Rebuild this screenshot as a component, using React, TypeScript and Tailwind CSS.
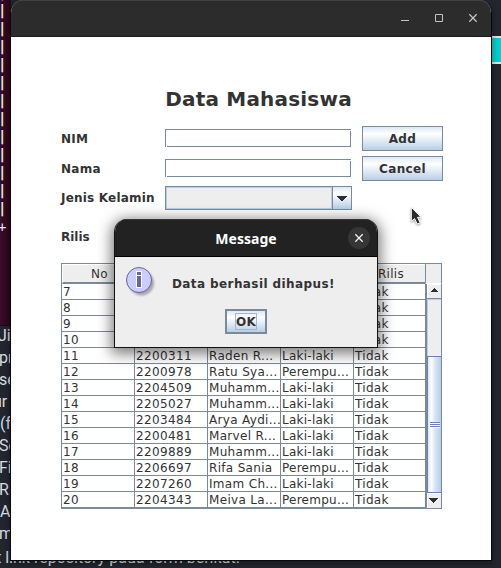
import React from "react";

type Row = [string, string, string, string, string];

const rows: Row[] = [
  ["7", "", "", "", "Tidak"],
  ["8", "", "", "", "Tidak"],
  ["9", "", "", "", "Tidak"],
  ["10", "", "", "", "Tidak"],
  ["11", "2200311", "Raden R...", "Laki-laki", "Tidak"],
  ["12", "2200978", "Ratu Sya...", "Perempu...", "Tidak"],
  ["13", "2204509", "Muhamm...", "Laki-laki", "Tidak"],
  ["14", "2205027", "Muhamm...", "Laki-laki", "Tidak"],
  ["15", "2203484", "Arya Aydi...", "Laki-laki", "Tidak"],
  ["16", "2200481", "Marvel R...", "Laki-laki", "Tidak"],
  ["17", "2209889", "Muhamm...", "Laki-laki", "Tidak"],
  ["18", "2206697", "Rifa Sania", "Perempu...", "Tidak"],
  ["19", "2207260", "Imam Ch...", "Laki-laki", "Tidak"],
  ["20", "2204343", "Meiva La...", "Perempu...", "Tidak"],
];

const pageLines = ["Ji", "pr", "se", "ur", "(f", "Sc", "Fi", "RI", "A", "m"];

function Terminal() {
  return (
    <div className="h-[326px] w-[11px] overflow-hidden border-b border-[#1b0a18] bg-linear-to-r from-[#3a0c2c] to-[#260819] pt-px font-['DejaVu_Sans_Mono',monospace] text-[14px] text-[#f3e6c0]">
      <div className="-mt-[18px] flex flex-col">
        {Array.from({ length: 13 }, (_, i) => (
          <span key={i} className="-ml-[2px] h-[18px] leading-[18px] font-bold">|</span>
        ))}
        <span className="-ml-[2px] h-[18px] leading-[20px] text-[#e8e4e8]">+</span>
      </div>
    </div>
  );
}

function Desktop() {
  return (
    <div className="flex h-[568px] w-[501px] justify-between overflow-hidden bg-[#23262f]">
      <div className="w-[400px] shrink-0">
        <Terminal />
        <div className="-mt-px font-[Roboto,sans-serif] text-[16px] text-[#dcdee2]">
          {pageLines.map((line) => (
            <div
              key={line}
              className={`h-[22px] leading-[22px] whitespace-nowrap ${line === "ur" ? "-ml-[7px]" : line === "Ji" ? "-ml-[2px]" : line === "(f" || line === "A" ? "" : "-ml-px"}`}
            >
              {line}
            </div>
          ))}
          <div className="-ml-[4px] h-[22px] pt-[2px] leading-[22px] whitespace-nowrap">t link repository pada form berikut.</div>
        </div>
      </div>
      <div className="w-[10px] pt-9">
        <div className="h-7 border-y-2 border-[#e4e4e4] bg-[#06cfcf]" />
      </div>
    </div>
  );
}

function TextField() {
  return (
    <div className="relative h-[18px] w-[186px] border border-[#7a8a99] bg-white">
      <span className="absolute top-0 -right-px size-px bg-white" />
      <span className="absolute -bottom-px left-0 size-px bg-white" />
    </div>
  );
}

function MetalButton({ children }: { children: string }) {
  return (
    <button className="h-[25px] w-[81px] border border-[#7a8a99] bg-[linear-gradient(180deg,#dde8f3_0%,#ffffff_30%,#e6eef6_55%,#b8cfe5_100%)] text-center leading-[22px] font-bold tracking-[0.35px]">
      {children}
    </button>
  );
}

function Arrow({ up = false }: { up?: boolean }) {
  return (
    <svg width="9" height="5" viewBox="0 0 9 5" shapeRendering="crispEdges" fill="#2e2e2e">
      {up ? <path d="M4 0h1v1h1v1h1v1h1v1H1V3h1V2h1V1h1z" /> : <path d="M0 0h9v1H8v1H7v1H6v1H5v1H4V4H3V3H2V2H1V1H0z" />}
    </svg>
  );
}

/** Wide arrow of the combo box. */
function ComboArrow() {
  return (
    <svg width="10" height="5" viewBox="0 0 10 5" shapeRendering="crispEdges" fill="#2e2e2e">
      <path d="M0 0h10v1H9v1H8v1H7v1H6v1H4V4H3V3H2V2H1V1H0z" />
    </svg>
  );
}

function ScrollBar() {
  return (
    <div className="flex w-[15px] shrink-0 flex-col border-r border-[#7a8a99] bg-[#eeeeee]">
      <div className="h-[14px] border-t border-l border-white pt-[3px] pl-[2px]">
        <Arrow up />
      </div>
      <div className="h-[58px] border-t border-[#7a8a99]">
        <div className="h-full border-t border-l border-[#b8cfe5]" />
      </div>
      <div className="h-[137px] border border-r-0 border-[#6382bf] bg-[linear-gradient(90deg,#dde8f3_0%,#ffffff_25%,#dce8f3_50%,#b8cfe5_100%)] pt-[65px] pl-[2px]">
        <div className="flex w-[10px] flex-col">
          <span className="h-px bg-[#6382bf]" />
          <span className="h-px bg-white" />
          <span className="h-px bg-[#6382bf]" />
          <span className="h-px bg-white" />
          <span className="h-px bg-[#6382bf]" />
          <span className="h-px bg-white" />
        </div>
      </div>
      <div className="flex-1 border-t border-l border-white pt-[4px] pl-px">
        <Arrow />
      </div>
    </div>
  );
}

function DataTable() {
  return (
    <div className="mt-[17px] w-[381px] border-t border-l border-[#7a8a99]">
      <div className="flex h-5 bg-[#eeeeee] leading-[18px]">
        <div className="flex w-[363px] border-t border-b-2 border-l border-t-white border-b-[#7a8a99] border-l-white text-center tracking-[0.3px]">
          <span className="w-[73px]">No</span>
          <span className="w-[73px]" />
          <span className="w-[73px]" />
          <span className="w-[73px]" />
          <span className="w-[70px] pl-[2px]">Rilis</span>
        </div>
        <div className="w-[17px] border-x border-b border-x-[#7a8a99] border-b-white" />
      </div>
      <div className="flex h-[225px] border-b border-[#7a8a99]">
        <div className="w-[365px] border-r border-[#7a8a99]">
          {rows.map((row) => (
            <div key={row[0]} className="flex h-4 border-b border-[#7a8a99] leading-4 whitespace-nowrap">
              {row.map((cell, i) => (
                <span
                  key={i}
                  className={`h-[15px] shrink-0 border-r border-[#7a8a99] pl-px ${i === 4 ? "w-[72px]" : "w-[73px]"} ${i < 2 ? "tracking-[0.36px]" : i === 3 ? "tracking-[0.25px]" : "tracking-[0.32px]"}`}
                >
                  {cell}
                </span>
              ))}
            </div>
          ))}
        </div>
        <ScrollBar />
      </div>
    </div>
  );
}

function MainWindow() {
  return (
    <section className="absolute top-0 left-[10px] h-[561px] w-[482px] overflow-hidden rounded-t-[13px] border-x border-b border-[#08090b] bg-white shadow-[0_2px_7px_rgba(0,0,0,0.4)]">
      <header className="flex h-[37px] items-center justify-end border-t border-b border-t-[#414141] border-b-[#1b1b1b] bg-[#2c2c2c]">
        <svg width="100" height="35" viewBox="0 0 100 35" fill="none" stroke="#c3c3c3">
          <path d="M10 19.5h8" />
          <path d="M44.5 13.5h7v7h-7z" />
          <path d="M78.3 13.3l7.4 7.4M85.7 13.3l-7.4 7.4" strokeWidth="1.3" />
        </svg>
      </header>
      <main className="pl-[50px] text-[#333333]">
        <h1 className="w-[395px] pt-[50px] text-center text-[20px] leading-6 font-bold tracking-[0.2px]">Data Mahasiswa</h1>
        <form className="pt-[15px]">
          <div className="flex h-[25px]">
            <label className="w-[104px] leading-[26px] font-bold tracking-[0.2px]">NIM</label>
            <div className="pt-[3px]"><TextField /></div>
            <div className="ml-[11px]"><MetalButton>Add</MetalButton></div>
          </div>
          <div className="mt-[5px] flex h-[25px]">
            <label className="w-[104px] leading-[26px] font-bold tracking-[0.3px]">Nama</label>
            <div className="pt-[3px]"><TextField /></div>
            <div className="ml-[11px]"><MetalButton>Cancel</MetalButton></div>
          </div>
          <div className="mt-[5px] flex h-6 items-center">
            <label className="w-[104px] font-bold tracking-[0.2px] whitespace-nowrap">Jenis Kelamin</label>
            <div className="flex h-6 w-[187px] border border-[#7a8a99]">
              <div className="flex-1 border border-[#b8cfe5] bg-[#eeeeee]" />
              <div className="flex w-[19px] items-center justify-center border-l border-[#7a8a99] bg-[linear-gradient(180deg,#dde8f3_0%,#ffffff_30%,#e6eef6_55%,#b8cfe5_100%)] pt-px">
                <ComboArrow />
              </div>
            </div>
          </div>
          <div className="mt-[18px] leading-[18px] font-bold">Rilis</div>
        </form>
        <DataTable />
      </main>
    </section>
  );
}

function InfoIcon() {
  return (
    <svg width="32" height="32" viewBox="0 0 32 32">
      <defs>
        <filter id="soft" x="-20%" y="-20%" width="150%" height="150%">
          <feGaussianBlur stdDeviation="1.3" />
        </filter>
      </defs>
      <circle cx="15.5" cy="16" r="12.5" fill="#777" opacity="0.6" filter="url(#soft)" />
      <circle cx="13" cy="13" r="12.5" fill="#ccccff" stroke="#666699" />
      <path d="M10.5 4.5h5v4h-5zM10.5 8.5h5v12h-5z" fill="#666699" stroke="#fff" shapeRendering="crispEdges" />
    </svg>
  );
}

function MessageDialog() {
  return (
    <section className="absolute top-[219px] left-[114px] h-[129px] w-[264px] rounded-t-[13px] bg-[#eeeeee] text-[#333333] shadow-[0_3px_14px_3px_rgba(0,0,0,0.5)]">
      <div className="h-full overflow-hidden rounded-t-[13px] border-x border-b border-[#111111]">
        <header className="flex h-[38px] border-t border-b border-t-[#383838] border-b-black bg-[#222222] pl-[38px]">
          <h2 className="w-[186px] text-center font-['Noto_Sans','Open_Sans',sans-serif] text-[14px] leading-[37px] font-bold tracking-[0.05px] text-white">Message</h2>
          <button className="mt-[7px] ml-[9px] flex size-[22px] items-center justify-center rounded-full bg-[#363636]">
            <svg width="10" height="10" viewBox="0 0 10 10" stroke="#f2f2f2" strokeWidth="1.3">
              <path d="M1.3 1.3l7.4 7.4M8.7 1.3L1.3 8.7" />
            </svg>
          </button>
        </header>
        <div className="flex pt-[10px] pl-[11px]">
          <InfoIcon />
          <p className="ml-[14px] pt-[8px] leading-[18px] font-bold tracking-[0.4px] whitespace-nowrap">Data berhasil dihapus!</p>
        </div>
        <button className="mt-[10px] ml-[110px] flex h-[25px] w-[42px] items-center justify-center border-2 border-[#7a8a99] bg-[linear-gradient(180deg,#dde8f3_0%,#ffffff_30%,#e6eef6_55%,#b8cfe5_100%)] font-bold">
          <span className="h-[17px] w-[22px] border border-[#a3b8cc] text-center leading-[16px] tracking-[0.2px]">OK</span>
        </button>
      </div>
    </section>
  );
}

function Pointer() {
  return (
    <svg className="absolute top-[205px] left-[407px] drop-shadow-[0_1px_1px_rgba(0,0,0,0.4)]" width="18" height="23" viewBox="0 0 18 23">
      <path d="M4.3 2.2v14.2l3.3-2.8 2.6 5.5 3-1.4-2.7-5.4h3.6z" fill="#2b2b2b" stroke="#fff" strokeWidth="1" />
    </svg>
  );
}

export default function App() {
  return (
    <div className="relative h-[568px] w-[501px] overflow-hidden font-['DejaVu_Sans',Verdana,sans-serif] text-[12px]">
      <Desktop />
      <MainWindow />
      <MessageDialog />
      <Pointer />
    </div>
  );
}
